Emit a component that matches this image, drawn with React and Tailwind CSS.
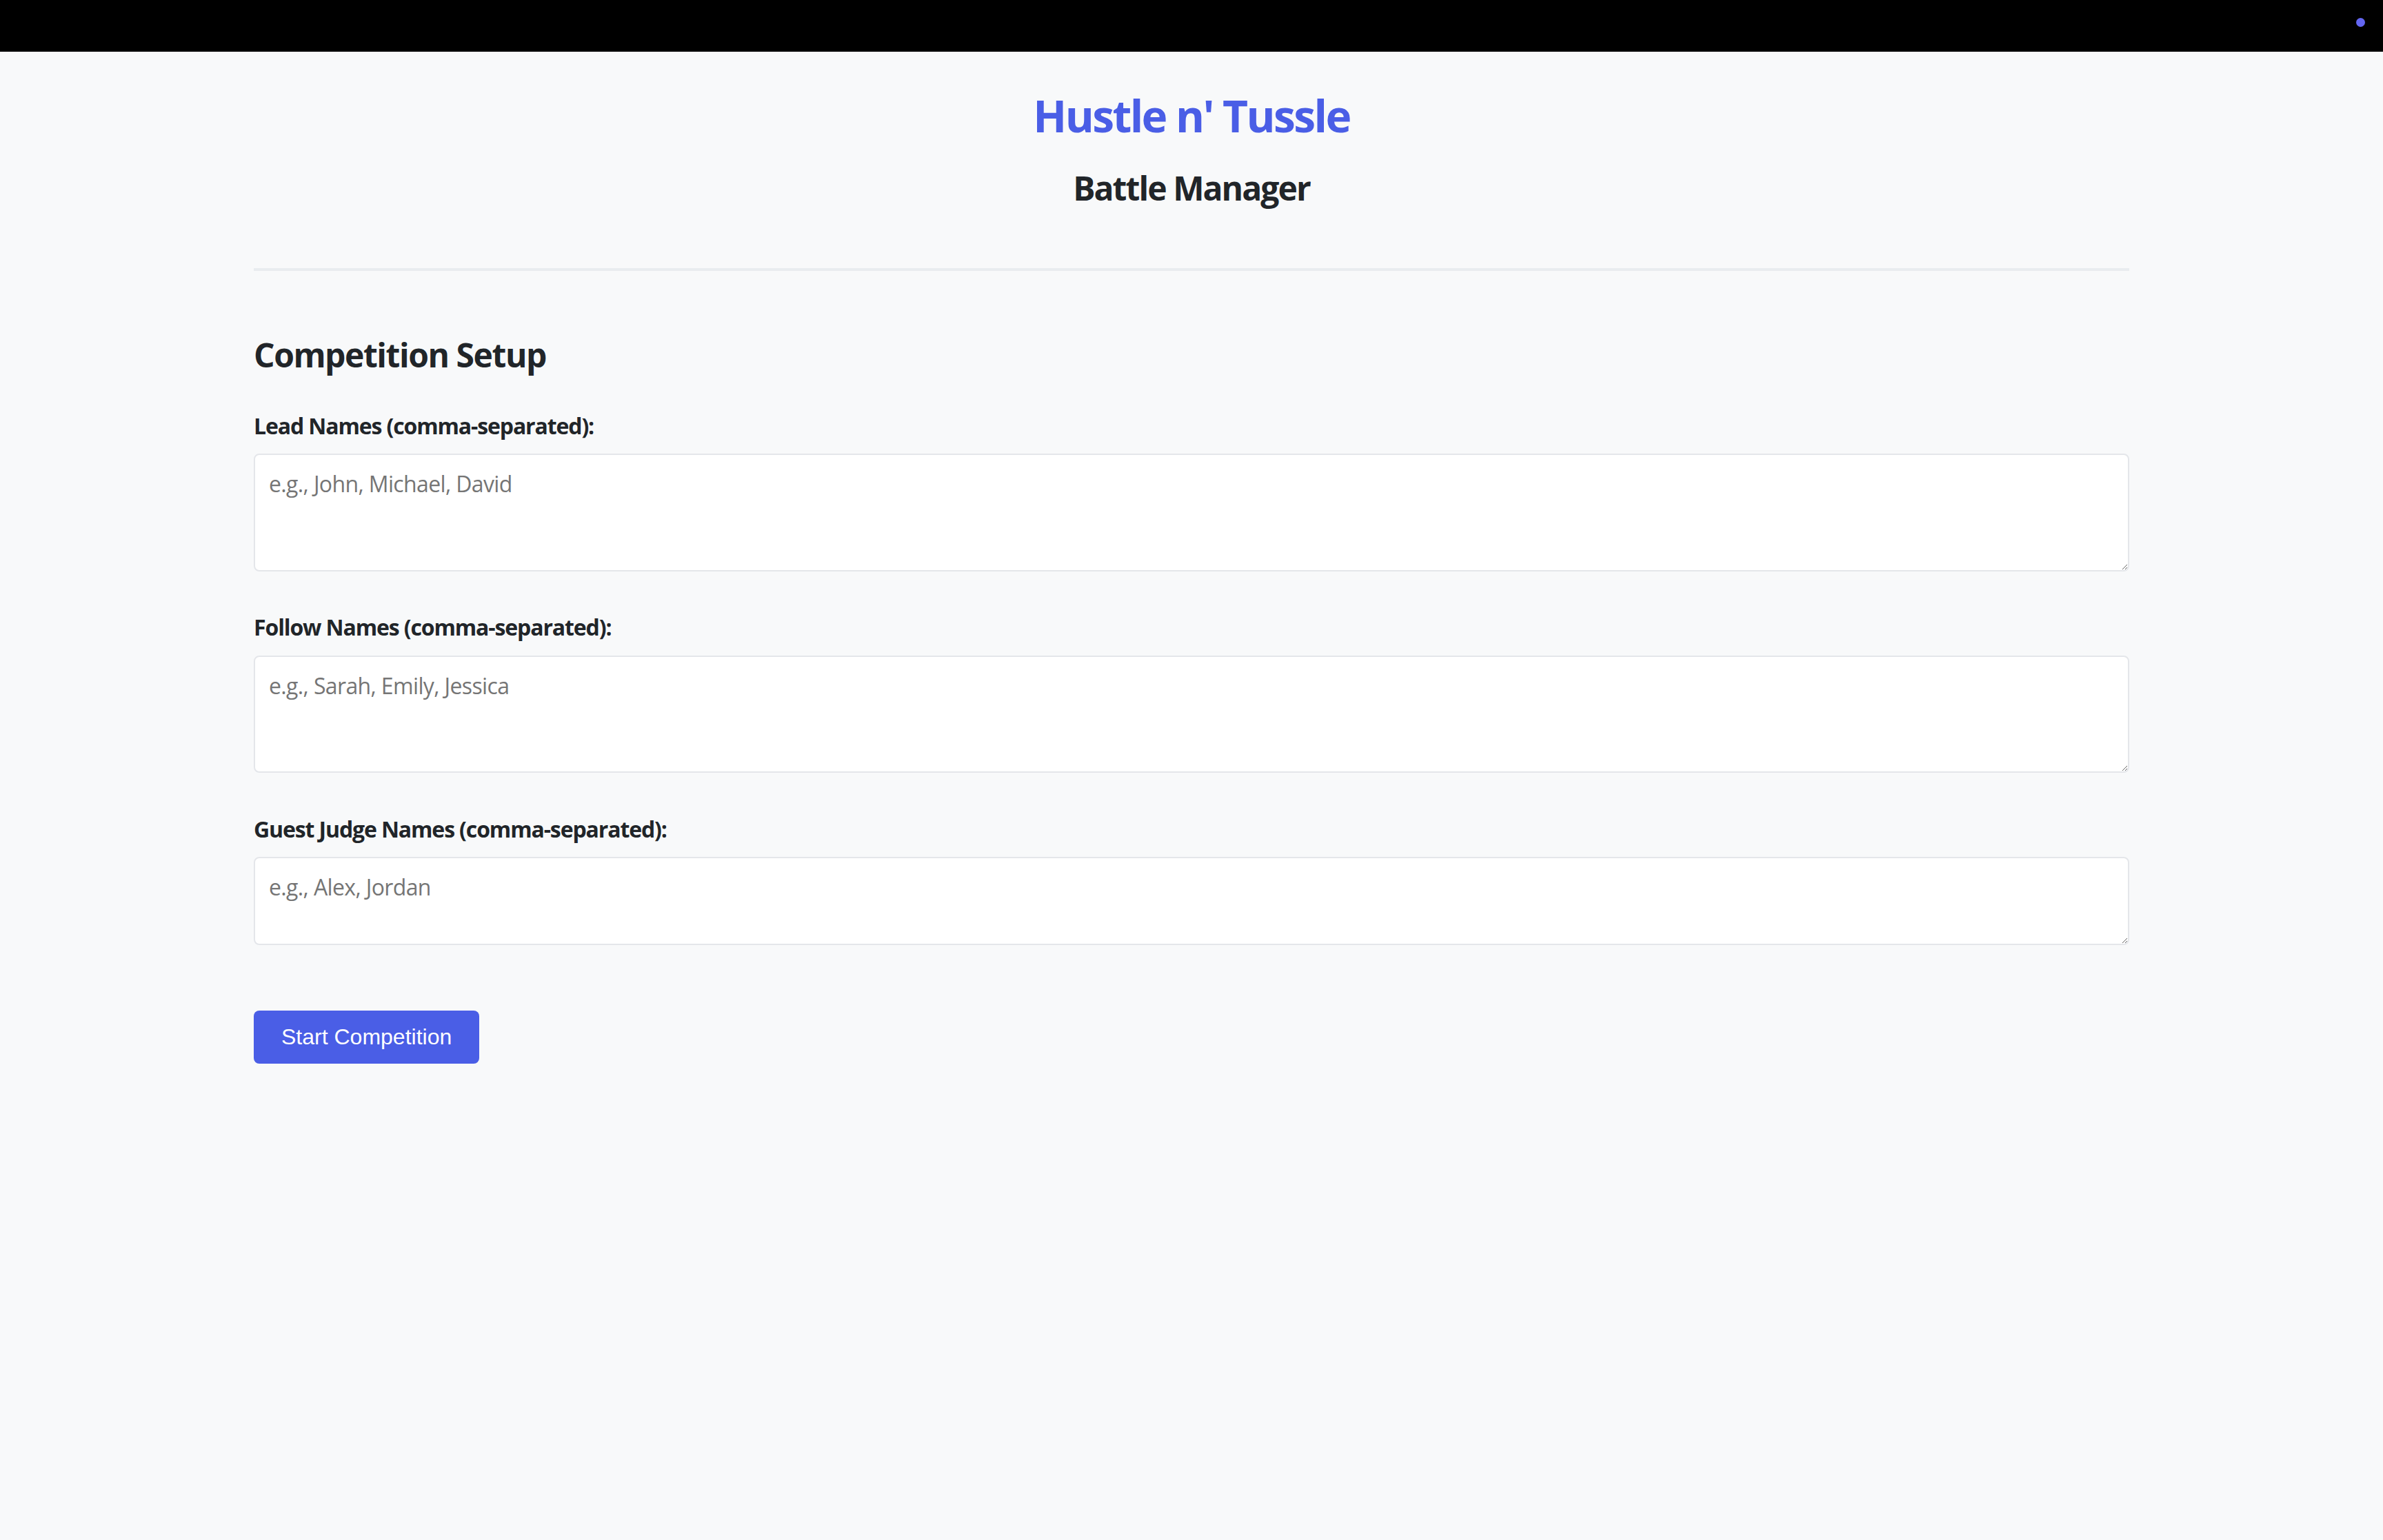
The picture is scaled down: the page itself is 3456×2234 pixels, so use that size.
const fields = [
  { label: 'Lead Names (comma-separated):', placeholder: 'e.g., John, Michael, David', height: 'h-[171px]', labelGap: 'mt-[63px]', boxGap: 'mt-[24px]' },
  { label: 'Follow Names (comma-separated):', placeholder: 'e.g., Sarah, Emily, Jessica', height: 'h-[170px]', labelGap: 'mt-[65px]', boxGap: 'mt-[25px]' },
  { label: 'Guest Judge Names (comma-separated):', placeholder: 'e.g., Alex, Jordan', height: 'h-[128px]', labelGap: 'mt-[66px]', boxGap: 'mt-[24px]' },
];

const NamesField = ({ label, placeholder, height, labelGap, boxGap }) => (
  <>
    <label className={`${labelGap} block text-[32px] leading-none font-bold tracking-[-0.035em]`}>{label}</label>
    <textarea
      placeholder={placeholder}
      className={`${boxGap} ${height} block w-full bg-white border-2 border-[#e4e6ea] rounded-[8px] px-[20px] py-[18px] text-[32px] leading-[48px] tracking-[-0.02em] text-[#212529] placeholder:text-[#757575] outline-none`}
    />
  </>
);

export default function App() {
  return (
    <div className="min-h-screen bg-[#f8f9fa] font-['Open_Sans',sans-serif] text-[#212529]">
      {/* top bar */}
      <div className="h-[75px] bg-black flex justify-end">
        <span className="mt-[26px] mr-[26px] w-[13px] h-[13px] rounded-full bg-[#6366f1]" />
      </div>

      <div className="max-w-[2800px] mx-auto px-[40px]">
        <header className="pt-[61px] pb-[92px] border-b-4 border-[#e9ecef] flex flex-col items-center">
          <h1 className="text-[64px] leading-none font-bold tracking-[-0.04em] text-[#4a5ee6]">Hustle n' Tussle</h1>
          <h2 className="mt-[49px] text-[48px] leading-none font-bold tracking-[-0.04em]">Battle Manager</h2>
        </header>

        <section className="pt-[98px] flex flex-col items-start">
          <h2 className="text-[48px] leading-none font-bold tracking-[-0.03em]">Competition Setup</h2>
          <div className="w-full">
            {fields.map((f) => (
              <NamesField key={f.label} {...f} />
            ))}
          </div>
          <button
            type="button"
            className="mt-[95px] px-[40px] py-[20px] bg-[#4a5ee6] text-white rounded-[8px] font-['Liberation_Sans',Arial,sans-serif] text-[32px] leading-[37px]"
          >
            Start Competition
          </button>
        </section>
      </div>
    </div>
  );
}
